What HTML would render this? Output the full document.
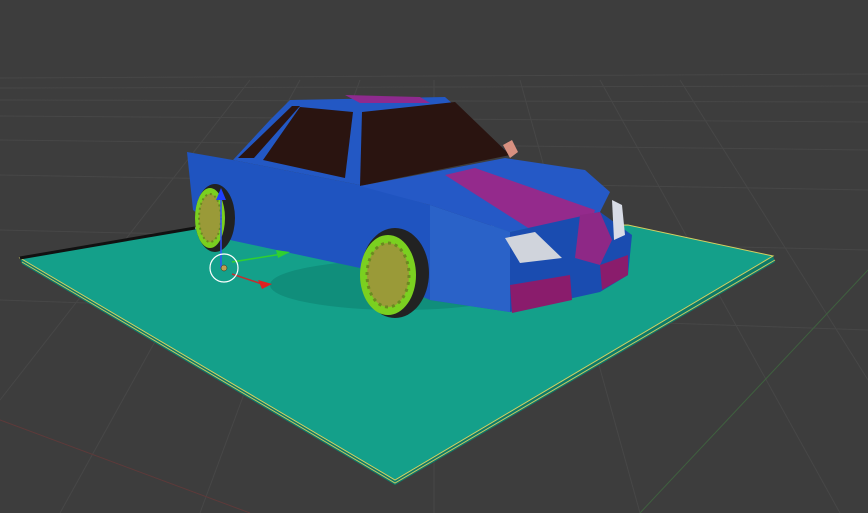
<!DOCTYPE html>
<html><head><meta charset="utf-8"><style>
html,body{margin:0;padding:0;background:#3d3d3d;width:868px;height:513px;overflow:hidden}
</style></head><body>
<svg width="868" height="513" viewBox="0 0 868 513" xmlns="http://www.w3.org/2000/svg">
<rect width="868" height="513" fill="#3d3d3d"/>
<g stroke="#474747" stroke-width="1" fill="none">
<path d="M0 78 L868 74 M0 88 L868 86 M0 100 L868 102 M0 116 L868 122 M0 140 L868 150 M0 175 L868 190 M0 230 L868 250 M0 300 L868 330"/>
<path d="M60 513 L300 80 M200 513 L360 80 M434 513 L434 80 M640 513 L520 80 M840 513 L600 80 M868 380 L680 80 M0 400 L250 80"/>
</g>
<path d="M0 420 L250 513" stroke="#5e3a3a" stroke-width="1"/>
<path d="M868 270 L640 513" stroke="#3f603f" stroke-width="1"/>
<polygon points="20,258 22,264 395,485 775,262 773,256 395,480" fill="#0d7a6a"/>
<polygon points="20,258 195,228 628,225 773,256 395,480" fill="#14a08a" stroke="#d6d060" stroke-width="1"/>
<path d="M20,258 L195,228" stroke="#111" stroke-width="3"/>
<path d="M22,262 L395,483 L775,260" stroke="#c8c860" stroke-width="1" fill="none"/>
<ellipse cx="400" cy="285" rx="130" ry="25" fill="#0e8272" opacity=".6"/>
<polygon points="187,152 233,160 360,185 430,205 510,232 510,312 430,300 360,268 230,240 193,210" fill="#1f54c0"/>
<polygon points="430,205 510,232 510,312 430,300" fill="#2a62c8"/>
<polygon points="290,100 445,97 505,150 360,185 233,160 270,120" fill="#2358c4"/>
<polygon points="345,95 420,97 430,103 360,103" fill="#8e2a8e"/>
<polygon points="238,158 292,106 300,106 254,158" fill="#2a1410"/>
<polygon points="263,160 300,107 353,112 345,178" fill="#2a1410"/>
<polygon points="362,112 455,102 510,155 360,186" fill="#2a1410"/>
<polygon points="503,145 512,140 518,152 510,158" fill="#d89080"/>
<polygon points="360,186 505,158 585,170 610,192 600,212 510,232 430,205" fill="#2559c6"/>
<polygon points="445,175 475,168 595,210 580,258 555,245" fill="#942a8c"/>
<polygon points="510,232 600,212 632,235 628,275 600,292 510,312" fill="#1a4cb0"/>
<polygon points="580,215 600,212 612,240 600,265 575,258" fill="#8e2886"/>
<polygon points="612,200 622,205 625,235 614,240" fill="#d8dce6"/>
<polygon points="505,238 535,232 562,258 520,263" fill="#d0d4dc"/>
<polygon points="510,285 570,275 572,300 512,313" fill="#8a1c6c"/>
<polygon points="600,265 628,255 628,275 602,290" fill="#8a1c6c"/>
<ellipse cx="215" cy="218" rx="20" ry="34" fill="#222"/>
<ellipse cx="210" cy="218" rx="15" ry="30" fill="#7ad020"/>
<ellipse cx="210" cy="218" rx="11" ry="24" fill="#9a9a38" stroke="#6a8a20" stroke-width="2" stroke-dasharray="2 3"/>
<ellipse cx="395" cy="273" rx="34" ry="45" fill="#222"/>
<ellipse cx="388" cy="275" rx="28" ry="40" fill="#7ad020"/>
<ellipse cx="388" cy="275" rx="21" ry="32" fill="#9a9a38" stroke="#6a8a20" stroke-width="3" stroke-dasharray="3 4"/>
<path d="M221,268 L221,198" stroke="#3050ff" stroke-width="1.5"/>
<polygon points="216,200 221,188 226,200" fill="#2040ff"/>
<path d="M232,262 L282,254" stroke="#30d030" stroke-width="1.5"/>
<polygon points="276,250 290,252 278,258" fill="#30d030"/>
<path d="M232,274 L262,284" stroke="#c03030" stroke-width="1.5"/>
<polygon points="258,280 272,284 262,289" fill="#e02020"/>
<circle cx="224" cy="268" r="14" fill="none" stroke="#fff" stroke-width="1.2"/>
<circle cx="224" cy="268" r="3" fill="#c0a050" stroke="#222" stroke-width=".5"/>
</svg>
</body></html>
